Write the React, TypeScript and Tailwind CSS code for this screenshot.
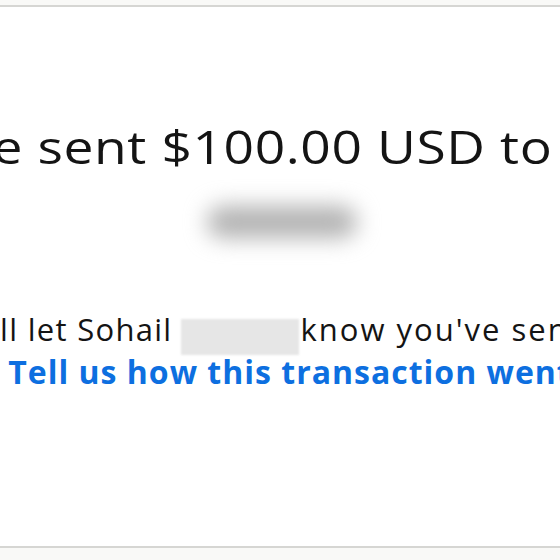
export default function App() {
  return (
    <div className="h-[560px] w-[560px] overflow-hidden bg-[#f9f9f7] pt-[5px] font-['Open_Sans','Noto_Sans',sans-serif] text-[#141414]">
      {/* card is wider than the window, so the centred lines run off both sides */}
      <div className="-mx-[200px] flex h-[543px] flex-col items-center border-y-2 border-[#d6d6d3] bg-white">
        {/* the capture is stretched sideways a little, hence the scale-x */}
        <h1 className="mt-[111px] origin-center scale-x-[1.16] whitespace-nowrap pr-[130px] text-[46px] leading-[56px] font-medium tracking-[0.5px]">
          You've sent $100.00 USD to
        </h1>

        {/* recipient name, blurred out */}
        <div className="ml-[4px] mt-[32px] h-[32px] w-[150px] rounded-full bg-[#b2b2b2] blur-[11px]" />

        <p className="mt-[71px] flex items-start whitespace-nowrap pl-[158px] text-[31px] leading-[40px] tracking-[1.3px]">
          <span>We'll let Sohail</span>
          <span className="ml-[8px] mt-[10px] h-[36px] w-[118px] bg-[#e6e6e6] blur-[1px]" />
          <span className="ml-[2px] tracking-[2px]">know you've sent the money.</span>
        </p>

        <a href="#" className="-mt-[3px] whitespace-nowrap pl-[20px] text-[32px] leading-[40px] font-bold tracking-[1px] text-[#0d6fe0]">
          Tell us how this transaction went
        </a>
      </div>
    </div>
  );
}
